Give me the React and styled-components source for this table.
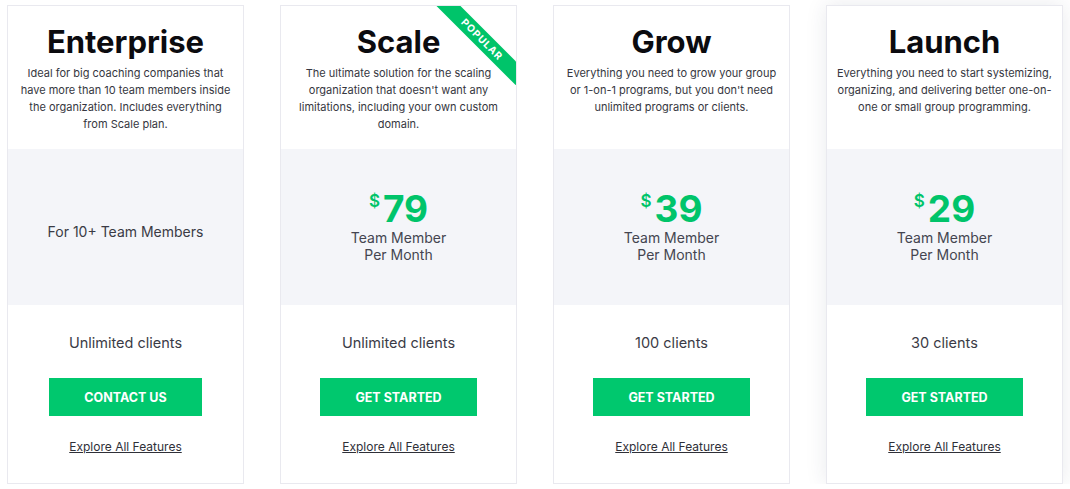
import React from 'react'
import styled, { createGlobalStyle } from 'styled-components'

const plans = [
  {
    name: 'Enterprise',
    lines: [
      'Ideal for big coaching companies that',
      'have more than 10 team members inside',
      'the organization. Includes everything',
      'from Scale plan.',
    ],
    note: 'For 10+ Team Members',
    clients: 'Unlimited clients',
    cta: 'Contact Us',
  },
  {
    name: 'Scale',
    lines: [
      'The ultimate solution for the scaling',
      "organization that doesn't want any",
      'limitations, including your own custom',
      'domain.',
    ],
    price: 79,
    clients: 'Unlimited clients',
    cta: 'Get Started',
    popular: true,
  },
  {
    name: 'Grow',
    lines: [
      'Everything you need to grow your group',
      "or 1-on-1 programs, but you don't need",
      'unlimited programs or clients.',
    ],
    price: 39,
    clients: '100 clients',
    cta: 'Get Started',
  },
  {
    name: 'Launch',
    lines: [
      'Everything you need to start systemizing,',
      'organizing, and delivering better one-on-',
      'one or small group programming.',
    ],
    price: 29,
    clients: '30 clients',
    cta: 'Get Started',
    active: true,
  },
]

const App = () => {
  return (
    <>
      <GlobalStyle />
      <Wrapper>
        {plans.map((plan) => (
          <Card key={plan.name} $active={plan.active}>
            {plan.popular && <Ribbon>Popular</Ribbon>}
            <Top>
              <Title>{plan.name}</Title>
              <Desc>
                {plan.lines.map((line) => (
                  <DescLine key={line}>{line}</DescLine>
                ))}
              </Desc>
            </Top>
            <PriceBox>
              {plan.price ? (
                <>
                  <Price>
                    <Dollar>$</Dollar>
                    {plan.price}
                  </Price>
                  <Per>
                    Team Member
                    <br />
                    Per Month
                  </Per>
                </>
              ) : (
                <Note>{plan.note}</Note>
              )}
            </PriceBox>
            <Bottom>
              <Clients>{plan.clients}</Clients>
              <Button>{plan.cta}</Button>
              <Explore href="#">Explore All Features</Explore>
            </Bottom>
          </Card>
        ))}
      </Wrapper>
    </>
  )
}

export default App

const GlobalStyle = createGlobalStyle`
  body {
    margin: 0;
    background: #fff;
    font-family: Inter, "Liberation Sans", sans-serif;
    color: #3a3b45;
  }
`

const Wrapper = styled.div`
  display: flex;
  gap: 36px;
  padding: 5px 0 0 7px;
`

const Card = styled.div`
  position: relative;
  overflow: hidden;
  width: 237px;
  height: 479px;
  box-sizing: border-box;
  border: 1px solid #e9e9ef;
  background: #fff;
  display: flex;
  flex-direction: column;
  box-shadow: ${(p) => (p.$active ? '0 0 20px rgba(40, 45, 80, 0.1)' : 'none')};
`

const Ribbon = styled.div`
  position: absolute;
  top: 25px;
  right: -22px;
  width: 112px;
  height: 17px;
  background: #00c46a;
  color: #fff;
  transform: rotate(45deg);
  font-size: 10px;
  font-weight: 700;
  letter-spacing: 0.9px;
  text-transform: uppercase;
  text-align: center;
  line-height: 17px;
`

const Top = styled.div`
  height: 143px;
  box-sizing: border-box;
  padding: 17px 6px 0;
  text-align: center;
`

const Title = styled.h2`
  margin: 0;
  font-size: 31px;
  line-height: 38px;
  font-weight: 700;
  color: #0b0b0f;
`

const Desc = styled.div`
  margin: 4px 0 0;
  font-size: 11px;
  line-height: 17px;
  color: #363741;
`

const DescLine = styled.div`
  white-space: nowrap;
`

const PriceBox = styled.div`
  height: 156px;
  background: #f4f5f9;
  display: flex;
  flex-direction: column;
  align-items: center;
  justify-content: center;
`

const Price = styled.div`
  display: flex;
  align-items: flex-start;
  color: #00c46a;
  font-size: 37px;
  line-height: 36px;
  font-weight: 700;
`

const Dollar = styled.span`
  font-size: 17px;
  line-height: 20px;
  margin-right: 3px;
  font-weight: 600;
`

const Per = styled.div`
  margin-top: 2px;
  text-align: center;
  font-size: 14px;
  line-height: 17px;
  color: #444550;
`

const Note = styled.div`
  margin-top: 8px;
  font-size: 14px;
  color: #3a3b45;
`

const Bottom = styled.div`
  display: flex;
  flex-direction: column;
  align-items: center;
  padding-top: 29px;
`

const Clients = styled.div`
  font-size: 14.5px;
  line-height: 18px;
  color: #3a3b45;
`

const Button = styled.button`
  margin-top: 26px;
  height: 38px;
  padding: 0 35px;
  border: none;
  background: #00c86e;
  color: #fff;
  font-family: inherit;
  font-size: 12.5px;
  font-weight: 700;
  text-transform: uppercase;
  cursor: pointer;
`

const Explore = styled.a`
  margin-top: 22px;
  font-size: 12px;
  line-height: 18px;
  color: #2f3038;
  text-decoration: underline;
`
